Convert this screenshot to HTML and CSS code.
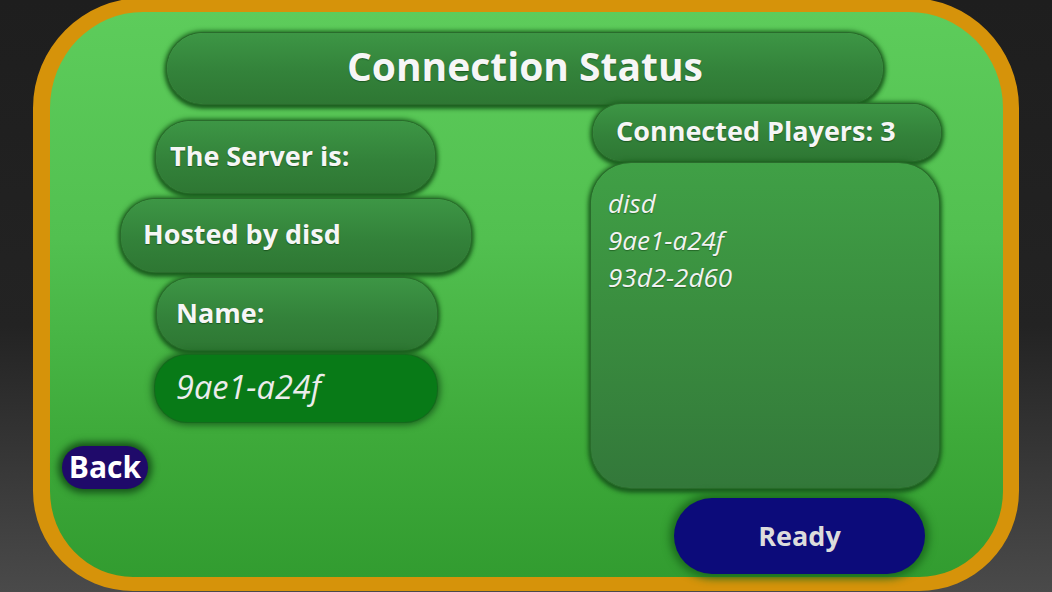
FILE: index.html
```html
<!DOCTYPE html>
<html lang="en">
<head>
<meta charset="utf-8">
<title>Connection Status</title>
<link rel="stylesheet" href="styles.css">
</head>
<body>
  <div class="frame">
    <div class="title pill">Connection Status</div>
    <div class="columns">
      <div class="left">
        <div class="pill label server">The Server is:</div>
        <div class="pill label hosted">Hosted by disd</div>
        <div class="pill label name">Name:</div>
        <div class="name-input">9ae1-a24f</div>
        <button class="back">Back</button>
      </div>
      <div class="right">
        <div class="pill label players">Connected Players: 3</div>
        <ul class="player-list">
          <li>disd</li>
          <li>9ae1-a24f</li>
          <li>93d2-2d60</li>
        </ul>
        <button class="ready">Ready</button>
      </div>
    </div>
  </div>
</body>
</html>
```

FILE: styles.css
```css
html, body {
  margin: 0;
  height: 100%;
}

body {
  width: 1052px;
  height: 592px;
  overflow: hidden;
  background: linear-gradient(180deg, #1e1e1e 0%, #232323 55%, #4a4a4a 100%);
  font-family: "Open Sans", "DejaVu Sans", sans-serif;
  color: #f6f6f6;
}

.frame {
  box-sizing: border-box;
  margin: -2px 33px 0;
  height: 593px;
  border: solid #d6930a;
  border-width: 14px 16px 14px 17px;
  border-radius: 110px 110px 100px 100px;
  background: linear-gradient(180deg, #5dcc5b 0%, #52c050 40%, #3eaa3a 75%, #329c30 100%);
  display: flex;
  flex-direction: column;
}

/* raised dark-green panels */
.pill {
  box-sizing: border-box;
  display: flex;
  align-items: center;
  background: linear-gradient(180deg, #3d9645 0%, #33823a 55%, #2e7733 100%);
  box-shadow: 0 0 0 1px #2a6c2c, 0 0 5px 2px #1d6420, 0 3px 5px 1px #15501a;
  text-shadow: 0 1px 1px rgba(0, 40, 0, 0.45);
  font-weight: 700;
}

.title {
  margin: 21px 0 0 117px;
  width: 716px;
  height: 71px;
  border-radius: 36px;
  justify-content: center;
  font-size: 39px;
  padding-bottom: 6px;
}

.columns {
  display: flex;
  align-items: flex-start;
}

.left {
  margin: 17px 0 0 12px;
  width: 409px;
  display: flex;
  flex-direction: column;
  align-items: flex-start;
}

.label {
  height: 72px;
  border-radius: 34px;
  font-size: 27px;
  padding-bottom: 4px;
}

.server {
  margin-left: 94px;
  width: 279px;
  padding-left: 14px;
}

.hosted {
  margin: 6px 0 0 59px;
  width: 350px;
  height: 73px;
  padding-left: 22px;
}

.name {
  margin: 6px 0 0 95px;
  width: 280px;
  padding-left: 19px;
}

.name-input {
  box-sizing: border-box;
  margin: 5px 0 0 93px;
  width: 282px;
  height: 67px;
  border-radius: 32px;
  background: #087a17;
  box-shadow: 0 0 0 1px #146a1c, 0 0 7px 3px #1a621e;
  display: flex;
  align-items: center;
  padding: 0 0 4px 21px;
  font-style: italic;
  font-size: 32.5px;
  color: #ececec;
}

button {
  font-family: inherit;
  border: none;
  font-weight: 700;
  cursor: pointer;
}

.back {
  margin-top: 24px;
  width: 86px;
  height: 43px;
  border-radius: 22px;
  background: #1f0a6a;
  box-shadow: 0 0 7px 4px #16551a;
  color: #fff;
  font-size: 30px;
  padding: 0 0 3px;
}

.right {
  margin-left: 120px;
  width: 350px;
  display: flex;
  flex-direction: column;
  align-items: flex-start;
}

.players {
  margin-left: 2px;
  width: 348px;
  height: 57px;
  border-radius: 28px;
  padding-left: 23px;
  font-size: 27px;
}

.player-list {
  box-sizing: border-box;
  list-style: none;
  margin: 2px 0 0;
  width: 348px;
  height: 325px;
  padding: 22px 0 0 17px;
  border-radius: 40px;
  background: linear-gradient(180deg, #40a046 0%, #3a8e3f 45%, #33783a 100%);
  box-shadow: 0 0 0 1px #2a6c2c, 0 0 5px 2px #1d6420, 0 3px 5px 1px #15501a;
  font-style: italic;
  font-size: 26px;
  line-height: 37px;
  color: #f2f2f2;
  text-shadow: 0 1px 1px rgba(0, 40, 0, 0.4);
}

.ready {
  margin: 10px 0 0 83px;
  width: 251px;
  height: 76px;
  border-radius: 38px;
  background: #0c0b7a;
  box-shadow: 0 0 8px 4px #1a6a1c;
  color: #dcdcdc;
  font-size: 27px;
  padding: 0 0 2px;
}
```
